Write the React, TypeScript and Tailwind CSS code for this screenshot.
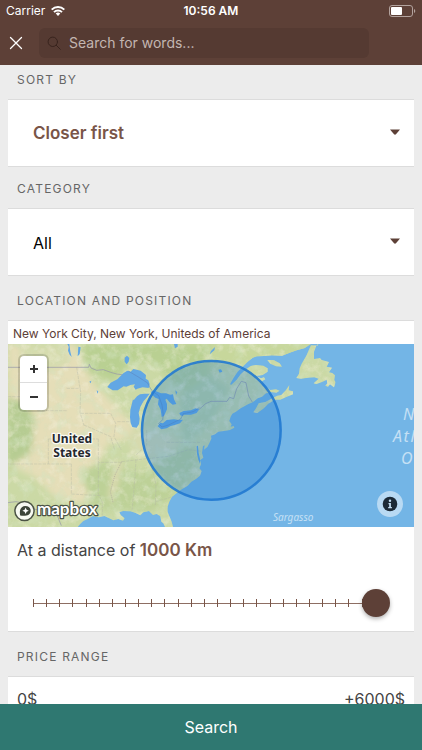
import { ReactNode, useState } from 'react'

interface SectionProps {
  title: string
  htmlFor?: string
  className?: string
  children: ReactNode
}

interface SelectFieldProps {
  id: string
  options: string[]
  className?: string
}

const TICKS = Array.from({ length: 27 }, (_, i) => i)

function StatusBar() {
  return (
    <div className="grid h-5 grid-cols-3 items-center px-1.5 pt-0.5 text-xs text-white">
      <div className="flex items-center gap-1.5">
        <span>Carrier</span>
        <svg viewBox="0 0 28 20" className="h-2.5 w-3.5" fill="none" stroke="currentColor" strokeWidth="4">
          <path d="M1.4 7.2a18 18 0 0 1 25.2 0" />
          <path d="M6 12.2a11.4 11.4 0 0 1 16 0" />
          <path d="M9.4 15.2a6.4 6.4 0 0 1 9.2 0L14 20z" fill="currentColor" stroke="none" />
        </svg>
      </div>
      <span className="text-center font-semibold whitespace-nowrap">10:56 AM</span>
      <svg viewBox="0 0 27 12" className="h-3 w-[27px] justify-self-end">
        <rect x="0.5" y="0.5" width="23" height="11" rx="2.5" fill="none" stroke="#b3a39e" />
        <rect x="2" y="2" width="11" height="8" rx="1" fill="#fff" />
        <path d="M25 4a2.2 2.2 0 0 1 0 4z" fill="#b3a39e" />
      </svg>
    </div>
  )
}

function SearchHeader() {
  return (
    <header className="shrink-0 bg-[#5d4037]">
      <StatusBar />
      <div className="flex items-center pt-2 pr-[53px] pb-[7px] pl-2">
        <button type="button" aria-label="Close" className="mr-4 flex size-[15px] items-center justify-center">
          <svg viewBox="0 0 14 14" className="size-3.5" stroke="#fff" strokeWidth="1.3" strokeLinecap="round">
            <path d="M1.5 1.5l11 11M12.5 1.5l-11 11" />
          </svg>
        </button>
        <label className="flex h-[30px] min-w-0 flex-1 items-center gap-2 rounded-md bg-[#553a32] px-2">
          <svg viewBox="0 0 14 14" className="size-3.5 shrink-0" fill="none" stroke="#38231d" strokeWidth="1" strokeLinecap="round">
            <circle cx="5.8" cy="5.8" r="4.7" />
            <path d="M9.3 9.3l4 4" />
          </svg>
          <input
            type="search"
            aria-label="Search for words"
            placeholder="Search for words..."
            className="min-w-0 flex-1 bg-transparent text-sm text-white outline-none placeholder:text-[#c3b6b1]"
          />
        </label>
      </div>
    </header>
  )
}

function Section({ title, htmlFor, className = 'pt-[15px]', children }: SectionProps) {
  return (
    <section className={className}>
      <label htmlFor={htmlFor} className="mb-[9px] block px-[17px] text-xs leading-5 tracking-widest text-[#666] uppercase">
        {title}
      </label>
      <div className="mx-2 border-y border-[#dcdcdc] bg-white">{children}</div>
    </section>
  )
}

function SelectField({ id, options, className = '' }: SelectFieldProps) {
  return (
    <div className="grid items-center">
      <select
        id={id}
        className={`col-start-1 row-start-1 h-[66px] w-full appearance-none bg-transparent pt-px pr-10 pl-[25px] outline-none ${className}`}
      >
        {options.map((option) => (
          <option key={option}>{option}</option>
        ))}
      </select>
      <svg viewBox="0 0 10 6" className="pointer-events-none col-start-1 row-start-1 mr-3.5 mb-0.5 h-1.5 w-2.5 justify-self-end" fill="#5d4037">
        <path d="M0 .4h10L6 5.2q-1 .9-2 0z" />
      </svg>
    </div>
  )
}

// Terrain is drawn on a 3x grid and scaled down to the map's own units
function Terrain() {
  return (
    <g transform="scale(.33333) translate(-24 -87)">
      <defs>
        <clipPath id="land">
          <path d="M24 87H933L913 100 890 106 873 112 846 122 815 121 793 123 770 124 758 128 743 140 728 155 713 170 700 190 690 208 694 209 710 194 722 178 738 163 752 153 768 150 790 152 803 160 803 170 788 180 768 183 783 190 792 187 796 193 786 199 788 212 797 220 806 222 812 233 798 235 786 245 773 250 758 262 744 268 733 274 722 280 708 290 697 296 692 305 688 318 695 328 692 335 701 333 703 338 690 345 672 348 655 350 645 358 633 362 634 371 628 385 622 396 612 404 614 391 609 393 606 414 610 428 600 436 603 447 598 460 605 468 600 482 588 492 574 500 563 512 545 523 529 535 516 545 508 560 503 575 503 590 508 604 515 620 519 636H495L490 625 484 620 481 604 470 597 459 600 447 588 430 592 421 601 407 594 392 589 370 588 358 591 362 600 374 610 369 617 355 612 340 616 326 609 313 603 297 607 279 603 263 612 250 618 240 628 233 636H24Z" />
          <path d="M768 280l8-15 20-4 18-10 18-9 12-2 14-15 10-15-2 16 13 3 0 9-20 8-18 8-17 0-20 13-14 14-18 13-12-2z" />
          <path d="M802 135l20 1 17 9 7 10-18-1-17-8z" />
          <path d="M801 218l10 7 17-2 11 4-10 6-18-2-13-9z" />
          <path d="M955 87l-2 5-20-1-14 31-14 24-6 14-2 16-8 13 14 2 21-3 19-1 13 4-15 14 8 2 19-7 12-6 2 11-6 7 8 3 6-7 12 9 5-15-4-7 2-14-8-7-10-2 9-14-16-3 7-14-22-6-5-6-18 3 0-22 8-20z" />
        </clipPath>
        <filter id="forest" x="0" y="0" width="100%" height="100%">
          <feTurbulence type="fractalNoise" baseFrequency="0.03" numOctaves="5" seed="8" />
          <feColorMatrix values="0 0 0 0 .65  0 0 0 0 .77  0 0 0 0 .53  3 0 0 0 -1.4" />
        </filter>
        <filter id="relief" x="0" y="0" width="100%" height="100%">
          <feTurbulence type="fractalNoise" baseFrequency="0.035" numOctaves="5" seed="23" />
          <feColorMatrix values="0 0 0 0 .92  0 0 0 0 .89  0 0 0 0 .74  0 3 0 0 -1.5" />
        </filter>
        <filter id="soft">
          <feGaussianBlur stdDeviation="9" />
        </filter>
      </defs>
      <rect x="24" y="87" width="1218" height="549" fill="#73b5e6" />
      <g clipPath="url(#land)">
        <rect x="24" y="87" width="1218" height="549" fill="#cbd9a5" />
        <g filter="url(#soft)">
          <path d="M24 87h200l25 60 35 60 60 60 60 70-10 30-70 20-30 60-10 90-40 30-80-20-60-60-80-40z" fill="#e5deb8" />
          <path d="M24 250l50 10 30 50-10 100-70 50z" fill="#b6cc92" />
          <path d="M60 87h130l20 60-60 20-90-20z" fill="#d6dcae" />
          <path d="M250 87h380v90l-50 60-50-20-60-70-70-10-60 60-80-30z" fill="#b9d092" />
          <path d="M240 470l60-30 60 20 80 10 80-60 60-20 20 60-60 80-90 60-170-10z" fill="#bdd197" />
          <path d="M345 440l20 0-10 60-20 60-10-10z" fill="#dfdcb4" />
          <path d="M633 87h310l-60 40-150 20-100 30z" fill="#c7d79b" />
          <path d="M380 350l60-10 70 20 30 30-60 40-80 0z" fill="#d6daae" />
          <path d="M540 240l90-60 60 40-60 110-80 60z" fill="#bcd2a0" />
        </g>
        <rect x="24" y="87" width="1218" height="549" filter="url(#forest)" opacity=".5" />
        <rect x="24" y="87" width="1218" height="549" filter="url(#relief)" opacity=".4" />
        <g fill="none" stroke="#b3b7a4" strokeWidth="1.6" opacity=".75">
          <path d="M103 157v130M24 245h85M112 287h90M145 372h150M145 372v75M24 447h190M214 447v90M230 157l12 75-2 60 12 40M200 220l42 0M242 295h90M252 330l80 35 12 40M295 372v70l70 0M332 295l15 30-5 40 22 40M365 440l50-6 90-10M352 320l40 0M440 345v45l-32 30M505 424l60-20 40 5M500 382h100M408 434l-6 90-6 62M450 434l18 75-2 62M466 560l50-14M295 442l0 95 12 25 0 40M214 537l90 5" strokeDasharray="10 3" />
          <path d="M365 440l-20 40-14 50 8 32" stroke="#a99f9b" strokeDasharray="3 3" strokeWidth="2.4" />
        </g>
        <g fill="none" stroke="#9494a8" strokeWidth="2">
          <path d="M24 157H266l2-9 5 11 17 7 20-2 22 8 18 5 30 4M592 288l25-22 16-7h48l8-12 12 4 9-30 14-22 14 4 8 40 6 10 6 10" />
          <path d="M24 563l24-3 20 4 40 20 52 0 12 18 12 30" />
        </g>
        <g fill="#62a7e4">
          <path d="M322 216l10-13 20-10 18-18 12-8 10 3 8-8 10 2 12 3 16 13-1 11 8 5 4 12-3 11-18-2-16 4-5 3-6-9 4-7-14 2-12 5-8-1-18 12-15 0z" />
          <path d="M449 236l-16 0-13 2-9 6-10 12-2-3-8 32-1 22 2 17 5 12 13 2 7-11 2-16-3-17 5-18 10-18 9-10z" />
          <path d="M452 230l13-3 18 8 15 0 12 4 9-1 3 15 7 14-11 2-10-8-8-10-4 3 5 13 0 16-9 20-7 3-3-22-8-16 2-16-10-4-9-8z" />
          <path d="M473 334l8-11 8 2 11-10 22-2 14 2 13-1-9 11-16 5-12 3-12 7-16 3z" />
          <path d="M541 301l-3-7 13-6 22-2 14-6 10 3-7 11-17 5-20 0-6 4z" />
          <path d="M374 128l7-6 7 7-2 11-6 8-6-8zM202 87l4 8-2 12 5 12 6 7-4-16-3-23zM235 95l7 2-3 20-6 7zM522 87h11v8l-8 5zM290 225l5 5-3 6zM526 226l6 6-4 8zM655 164l8-1 4 7-8 3zM268 200l6-3-2 8zM633 108l12-12-2 10-14 12z" />
          <path d="M590 394l4-2 2 22 4 18 0 14-5-12-4-18z" />
        </g>
        <path d="M385 168l30 18 28 18 8 16 8 10 17 12 10 28 4 30-2 14-12 12 10 10 20-6 36-18 8-16 30-6 18-12" fill="none" stroke="#5a83bd" strokeWidth="1.6" />
      </g>
      <circle cx="634" cy="346" r="208" fill="#217bd2" fillOpacity=".3" stroke="#2179d0" strokeOpacity=".9" strokeWidth="7.5" />
    </g>
  )
}

function MapboxMark() {
  return (
    <g>
      <circle cx="16.5" cy="167" r="9.6" fill="#fff" fillOpacity=".85" stroke="#4b5345" strokeWidth="1.5" />
      <path d="M12.2 171.5c-1-4.3 0-9.5 5.2-9.5 3 0 5.3 2 5.3 4.8 0 4.7-5.3 5.7-10.5 4.7z" fill="#3c4439" />
      <path d="M17.6 163.5l1 2.2 2.2 1-2.2 1-1 2.2-1-2.2-2.2-1 2.2-1z" fill="#fff" />
      <text
        x="29"
        y="171"
        className="font-[Lato,sans-serif] text-[17px] font-bold"
        fill="#fff"
        stroke="#4b5345"
        strokeWidth="2.4"
        strokeLinejoin="round"
        paintOrder="stroke"
      >
        mapbox
      </text>
    </g>
  )
}

function LocationMap() {
  return (
    <div className="relative">
      <svg viewBox="0 0 406 183" className="block h-auto w-full">
        <Terrain />
        <g
          className="font-['Noto_Sans',sans-serif] text-xs font-bold"
          fill="#26282e"
          stroke="#fff"
          strokeOpacity=".85"
          strokeWidth="2.4"
          strokeLinejoin="round"
          paintOrder="stroke"
          textAnchor="middle"
        >
          <text x="64" y="99">United</text>
          <text x="64" y="113">States</text>
        </g>
        <g className="font-['Noto_Sans',sans-serif] text-base tracking-widest italic" fill="#c5e0f5">
          <text x="395" y="76">North</text>
          <text x="385" y="98">Atlantic</text>
          <text x="393" y="120">Ocean</text>
        </g>
        <text x="265" y="177" className="font-['Noto_Sans',sans-serif] text-[10px] italic" fill="#c5e0f5">
          Sargasso
        </text>
        <MapboxMark />
      </svg>
      <div className="absolute top-3 left-3 flex flex-col divide-y divide-[#ddd] rounded-sm bg-white shadow-[0_0_0_2px_rgba(0,0,0,0.15)]">
        <button type="button" aria-label="Zoom in" className="flex h-[27px] w-[27px] items-center justify-center">
          <svg viewBox="0 0 10 10" className="size-2.5" stroke="#333" strokeWidth="2">
            <path d="M1 5h8M5 1v8" />
          </svg>
        </button>
        <button type="button" aria-label="Zoom out" className="flex h-[27px] w-[27px] items-center justify-center">
          <svg viewBox="0 0 10 10" className="size-2.5" stroke="#333" strokeWidth="2">
            <path d="M1 5h8" />
          </svg>
        </button>
      </div>
      <button
        type="button"
        aria-label="Map information"
        className="absolute right-[11px] bottom-2.5 flex size-[26px] items-center justify-center rounded-full bg-white/50"
      >
        <svg viewBox="0 0 16 16" className="size-4">
          <circle cx="8" cy="8" r="7.3" fill="#1c2a36" />
          <path d="M6.5 7h2.4v4h1v1.2H6.2V11h1V8.2h-.7z" fill="#c5dff3" />
          <circle cx="8" cy="4.8" r="1.2" fill="#c5dff3" />
        </svg>
      </button>
    </div>
  )
}

function DistanceSlider() {
  const [distance, setDistance] = useState(1000)

  return (
    <>
      <label htmlFor="distance" className="block px-[9px] pt-[11px] text-base leading-6 text-[#444]">
        At a distance of <strong className="text-[17px] font-semibold text-[#795548]">{distance} Km</strong>
      </label>
      <div className="mt-[27px] mr-6 mb-3.5 ml-[11px] grid items-center">
        <div className="col-start-1 row-start-1 mx-3.5 flex items-center justify-between bg-[linear-gradient(#8d6e63,#8d6e63)] bg-[length:100%_1px] bg-center bg-no-repeat">
          {TICKS.map((tick) => (
            <span key={tick} className="h-2 w-px bg-[#795548]" />
          ))}
        </div>
        <input
          id="distance"
          type="range"
          min={0}
          max={1000}
          value={distance}
          onChange={(e) => setDistance(Number(e.target.value))}
          className="z-10 col-start-1 row-start-1 h-7 w-full appearance-none bg-transparent [&::-webkit-slider-thumb]:size-7 [&::-webkit-slider-thumb]:appearance-none [&::-webkit-slider-thumb]:rounded-full [&::-webkit-slider-thumb]:bg-[#5d4037] [&::-webkit-slider-thumb]:shadow-[0_2px_4px_rgba(0,0,0,0.3)]"
        />
      </div>
    </>
  )
}

export default function App() {
  return (
    <div className="flex h-dvh flex-col bg-[#ececec] font-[Inter,sans-serif]">
      <SearchHeader />
      <main className="min-h-0 flex-1 overflow-y-auto [scrollbar-width:none]">
        <Section title="Sort by" htmlFor="sort" className="pt-[5px]">
          <SelectField id="sort" options={['Closer first', 'Newest first']} className="text-[17px] font-semibold text-[#795548]" />
        </Section>
        <Section title="Category" htmlFor="category" className="pt-3">
          <SelectField id="category" options={['All']} className="text-base text-black" />
        </Section>
        <Section title="Location and position">
          <p className="px-[5px] pt-[3px] text-xs leading-5 text-[#5d4037]">New York City, New York, Uniteds of America</p>
          <LocationMap />
          <DistanceSlider />
        </Section>
        <Section title="Price range">
          <div className="flex justify-between px-[9px] py-2.5 text-base leading-6 text-[#444]">
            <span>0$</span>
            <span>+6000$</span>
          </div>
        </Section>
      </main>
      <button type="button" className="h-[46px] w-full shrink-0 bg-[#2f7871] text-base text-white">
        Search
      </button>
    </div>
  )
}
